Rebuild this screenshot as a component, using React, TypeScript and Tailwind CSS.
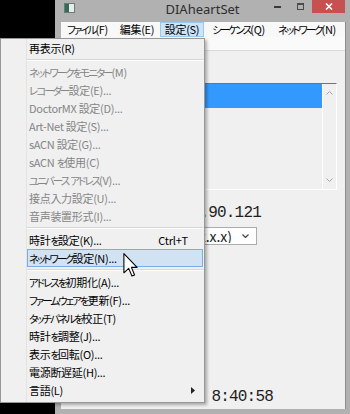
import React from 'react'

type MenuItem = {
  label: string
  disabled?: boolean
  shortcut?: string
  submenu?: boolean
  hot?: boolean
} | null

const jp = "font-['Noto_Sans_CJK_JP',sans-serif] [font-feature-settings:'palt']"
const mono = "font-['Liberation_Mono','Noto_Sans_CJK_JP',monospace] text-[16px] leading-[16px] tracking-[-0.8px] text-[#1e1e1e] whitespace-nowrap"

const menuBar = [
  { label: 'ファイル(F)', w: 'w-[53px]' },
  { label: '編集(E)', w: 'w-[46px]' },
  { label: '設定(S)', w: 'w-[44px]', open: true },
  { label: 'シーケンス(Q)', w: 'w-[69px]' },
  { label: 'ネットワーク(N)', w: 'w-[68px]' },
]

const items: MenuItem[] = [
  { label: '再表示(R)' },
  null,
  { label: 'ネットワークをモニター(M)', disabled: true },
  { label: 'レコーダー設定(E)...', disabled: true },
  { label: 'DoctorMX 設定(D)...', disabled: true },
  { label: 'Art-Net 設定(S)...', disabled: true },
  { label: 'sACN 設定(G)...', disabled: true },
  { label: 'sACN を使用(C)', disabled: true },
  { label: 'ユニバース アドレス(V)...', disabled: true },
  { label: '接点入力設定(U)...', disabled: true },
  { label: '音声装置形式(I)...', disabled: true },
  null,
  { label: '時計を設定(K)...', shortcut: 'Ctrl+T' },
  { label: 'ネットワーク設定(N)...', hot: true },
  null,
  { label: 'アドレスを初期化(A)...' },
  { label: 'ファームウェアを更新(F)...' },
  { label: 'タッチパネルを校正(T)' },
  { label: '時計を調整(J)...' },
  { label: '表示を回転(O)...' },
  { label: '電源断遅延(H)...' },
  { label: '言語(L)', submenu: true },
]

// Meiryo UI draws kana much narrower than Noto; tighten the kana runs only
function Jp({ text }: { text: string }) {
  const parts = text.split(/([\u3040-\u30ff]+)/)
  return (
    <>
      {parts.map((p, i) =>
        i % 2 === 1 ? (
          <span key={i} className="text-[10.5px] tracking-[-2px]">
            {p}
          </span>
        ) : (
          <React.Fragment key={i}>{p}</React.Fragment>
        ),
      )}
    </>
  )
}

function TitleBar() {
  return (
    <div className="grid h-[22px] grid-cols-[1fr_auto_1fr] items-start">
      <div className="pl-[9px] pt-[3px]">
        <svg width="11" height="10" viewBox="0 0 11 10">
          <rect x="0.5" y="0.5" width="10" height="9" fill="#e8ecea" stroke="#6a7a74" />
          <rect x="1" y="1" width="4" height="8" fill="#2f6d55" />
        </svg>
      </div>
      <div className="pt-[1px] font-['Noto_Sans',sans-serif] text-[13px] leading-[17px] text-[#2e2e2e]">DIAheartSet</div>
      <div className="flex justify-end pr-[5px]">
        <div className="flex h-[13px] w-[23px] items-center justify-center">
          <div className="h-[2px] w-[7px] bg-[#3a3a3a]" />
        </div>
        <div className="flex h-[13px] w-[23px] items-center justify-center">
          <div className="h-[7px] w-[7px] border border-t-2 border-[#4a4a4a]" />
        </div>
        <div className="flex h-[13px] w-[33px] items-center justify-center bg-[#c75050]">
          <svg width="8" height="7" viewBox="0 0 8 7">
            <path d="M1 0.5 L7 6.5 M7 0.5 L1 6.5" stroke="white" strokeWidth="1.6" />
          </svg>
        </div>
      </div>
    </div>
  )
}

function MenuBar() {
  return (
    <div className="flex h-[15px] bg-[#f8f8f8]">
      {menuBar.map((m) => (
        <div
          key={m.label}
          className={`${m.w} flex items-center justify-center whitespace-nowrap border text-[11px] leading-[13px] tracking-[-0.3px] ${
            m.open ? 'border-[#99c9ef] bg-[#cce4f7]' : 'border-transparent'
          }`}
        >
          <Jp text={m.label} />
        </div>
      ))}
    </div>
  )
}

function Gutter() {
  return <div className="w-[26px] shrink-0 border-r border-[#e2e3e3]" />
}

function DropMenu() {
  return (
    <div className="absolute left-0 top-[38px] flex w-[205px] flex-col border border-[#979797] bg-[#f0f0f0] shadow-[2px_2px_3px_rgba(0,0,0,0.3)]">
      {items.map((it, i) =>
        it === null ? (
          <div key={i} className="flex h-[6px]">
            <Gutter />
            <div className="flex flex-1 flex-col justify-center">
              <div className="h-px bg-[#d7d7d7]" />
              <div className="h-px bg-white" />
            </div>
          </div>
        ) : (
          <div key={i} className="flex h-[18px]">
            <Gutter />
            <div
              className={`mr-[1px] flex flex-1 items-center border pl-[1px] pr-[14px] text-[11px] leading-[13px] ${
                it.hot ? 'border-[#78aee5] bg-[#d1e2f2]' : 'border-transparent'
              } ${it.disabled ? 'text-[#858585]' : 'text-black'}`}
            >
              <span className="flex-1 whitespace-nowrap tracking-[-0.3px]">
                <Jp text={it.label} />
              </span>
              {it.shortcut && <span className="tracking-[-0.2px]">{it.shortcut}</span>}
              {it.submenu && (
                <svg className="mr-[-7px]" width="4" height="7" viewBox="0 0 4 7">
                  <path d="M0 0 L4 3.5 L0 7 Z" fill="#222" />
                </svg>
              )}
            </div>
          </div>
        ),
      )}
      <div className="flex h-[3px]">
        <Gutter />
      </div>
    </div>
  )
}

export default function App() {
  return (
    <div className={`relative flex h-[414px] w-[350px] overflow-hidden bg-black text-black ${jp}`}>
      <div className="w-[55px] shrink-0" />
      <div className="flex w-[295px] shrink-0 flex-col bg-[#b1b1b1]">
        <TitleBar />
        <div className="flex flex-1 flex-col pb-[5px] pl-[6px] pr-[4px]">
          <div className="flex flex-1 flex-col border-r border-[#8c8c8c] bg-[#f0f0f0]">
            <MenuBar />
            <div className="h-[14px] border-b border-[#dadada] bg-[#fafafa]" />

            {/* module list */}
            <div className="ml-[10px] mr-[8px] mt-[32px] flex h-[107px] border border-b-white border-l-[#747474] border-r-white border-t-[#747474]">
              <div className="flex-1">
                <div className="h-[24px] bg-[#3399ff]" />
              </div>
              <div className="flex w-[14px] flex-col items-center justify-between border-l border-white py-[7px]">
                <svg width="7" height="4" viewBox="0 0 7 4">
                  <path d="M0.5 3.5 L3.5 0.5 L6.5 3.5" fill="none" stroke="#a6a6a6" />
                </svg>
                <svg width="7" height="4" viewBox="0 0 7 4">
                  <path d="M0.5 0.5 L3.5 3.5 L6.5 0.5" fill="none" stroke="#a6a6a6" />
                </svg>
              </div>
            </div>

            <div className="mt-[15px] flex h-[16px] w-[200px] justify-end">
              <span className={mono}>IP:192.168.90.121</span>
            </div>

            <div className="ml-[40px] mt-[6px] flex h-[18px] w-[156px] items-center border border-[#acacac] bg-white">
              <span className="flex-1 overflow-hidden whitespace-nowrap pr-[2px] text-right text-[14px] leading-none text-[#222]">
                自動 (x.x.x.x)
              </span>
              <div className="flex w-[22px] justify-center">
                <svg width="7" height="4" viewBox="0 0 7 4">
                  <path d="M0.5 0.5 L3.5 3.5 L6.5 0.5" fill="none" stroke="#444" strokeWidth="1.2" />
                </svg>
              </div>
            </div>

            <div className="mt-[144px] flex h-[16px] w-[212px] justify-end">
              <span className={mono}>時計:2013/09/04  8:40:58</span>
            </div>
          </div>
        </div>
      </div>

      <DropMenu />

      <svg className="absolute left-[123px] top-[253px]" width="15" height="24" viewBox="0 0 12 20">
        <path
          d="M0.5 0.5 L0.5 16.5 L4.5 12.8 L7.2 19.2 L9.4 18.3 L6.8 12 L11.5 12 Z"
          fill="white"
          stroke="black"
          strokeWidth="0.9"
          strokeLinejoin="round"
        />
      </svg>
    </div>
  )
}
